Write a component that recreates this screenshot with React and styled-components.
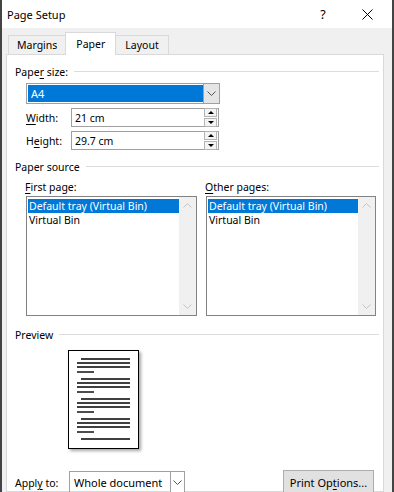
import React from "react";
import styled, { createGlobalStyle } from "styled-components";

const Global = createGlobalStyle`
  html, body { margin: 0; padding: 0; background: #fff; }
  body { font-family: "Noto Sans", "Open Sans", sans-serif; font-size: 10.5px; color: #000; }
`;

const Window = styled.div`
  width: 394px;
  height: 492px;
  box-sizing: border-box;
  border-left: 2px solid #444;
  border-right: 2px solid #444;
  background: #f0f0f0;
  display: flex;
  flex-direction: column;
  overflow: hidden;
`;

const TitleBar = styled.div`
  height: 28px;
  flex-shrink: 0;
  background: #fff;
  display: flex;
  align-items: center;
  padding-left: 5px;
  padding-right: 3px;
  font-size: 11px;
`;

const Title = styled.div`
  flex: 1;
`;

const TitleButton = styled.div`
  width: 44px;
  display: flex;
  justify-content: center;
  font-size: 12.5px;
`;

const TabStrip = styled.div`
  height: 27px;
  flex-shrink: 0;
  display: flex;
  align-items: flex-end;
  padding-left: 7px;
  margin-bottom: -1px;
  position: relative;
  z-index: 1;
`;

const Tab = styled.div`
  height: ${(p) => (p.$active ? 23 : 20)}px;
  box-sizing: border-box;
  padding: 0 ${(p) => (p.$w || 8)}px;
  display: flex;
  align-items: center;
  border: 1px solid #d9d9d9;
  border-bottom: ${(p) => (p.$active ? "none" : "1px solid #d9d9d9")};
  margin-left: -1px;
  background: ${(p) => (p.$active ? "#fff" : "#f0f0f0")};
  font-size: 10.5px;
`;

const Panel = styled.div`
  flex: 1;
  background: #fff;
  border: 1px solid #d9d9d9;
  margin: 0 8px 0 4px;
  padding: 9px 0 0 8px;
  display: flex;
  flex-direction: column;
`;

const Header = styled.div`
  height: 15px;
  margin-top: ${(p) => p.$mt || 0}px;
  display: flex;
  align-items: center;
  gap: 6px;
  &::after {
    content: "";
    flex: 1;
    height: 1px;
    background: #dcdcdc;
    margin-right: 4px;
  }
`;

const U = styled.span`
  text-decoration: underline;
  text-underline-offset: 2px;
`;

const Combo = styled.div`
  width: ${(p) => p.$w}px;
  height: ${(p) => p.$h}px;
  margin-left: ${(p) => p.$ml || 0}px;
  margin-top: ${(p) => p.$mt || 0}px;
  box-sizing: border-box;
  border: 1px solid #a0a0a0;
  display: flex;
  padding: 1px 0 1px 1px;
  flex-shrink: 0;
`;

const ComboText = styled.div`
  flex: 1;
  display: flex;
  align-items: center;
  padding-left: 3px;
  background: ${(p) => (p.$selected ? "#0078d7" : "#fff")};
  color: ${(p) => (p.$selected ? "#fff" : "#000")};
  font-size: 11px;
  white-space: nowrap;
  overflow: hidden;
`;

const DropButton = styled.div`
  width: ${(p) => p.$w || 15}px;
  margin: -1px 0 -1px 0;
  border-left: 1px solid #a0a0a0;
  background: ${(p) => (p.$gray ? "#e5e5e5" : "#fff")};
  display: flex;
  align-items: center;
  justify-content: center;
`;

const FieldRow = styled.div`
  display: flex;
  align-items: center;
  margin-top: 4px;
  padding-left: 11px;
`;

const FieldLabel = styled.div`
  width: 45px;
`;

const Input = styled.div`
  width: 148px;
  height: 19px;
  box-sizing: border-box;
  border: 1px solid #a0a0a0;
  display: flex;
  align-items: center;
  padding-left: 3px;
`;

const InputText = styled.div`
  flex: 1;
  font-size: 10.5px;
`;

const Spin = styled.div`
  width: 13px;
  margin-right: 1px;
  display: flex;
  flex-direction: column;
  gap: 1px;
`;

const SpinHalf = styled.div`
  height: 7px;
  border: 1px solid #b4b4b4;
  background: #f4f4f4;
  display: flex;
  align-items: center;
  justify-content: center;
  &::before {
    content: "";
    border-left: 3px solid transparent;
    border-right: 3px solid transparent;
    ${(p) => (p.$down ? "border-top: 3px solid #000;" : "border-bottom: 3px solid #000;")}
  }
`;

const ListsRow = styled.div`
  display: flex;
  gap: 9px;
  margin-top: 6px;
  padding-left: 11px;
`;

const ListColumn = styled.div`
  display: flex;
  flex-direction: column;
`;

const ListLabel = styled.div`
  height: 14px;
  display: flex;
  align-items: center;
  margin-bottom: 2px;
  margin-left: -1px;
`;

const ListBox = styled.div`
  width: ${(p) => p.$w}px;
  height: 120px;
  box-sizing: border-box;
  border: 1px solid #828282;
  display: flex;
  padding: 2px 0 1px 1px;
`;

const ListItems = styled.div`
  flex: 1;
`;

const ListItem = styled.div`
  height: 14px;
  line-height: 14px;
  padding-left: 1px;
  font-size: 10.5px;
  background: ${(p) => (p.$selected ? "#0078d7" : "transparent")};
  color: ${(p) => (p.$selected ? "#fff" : "#000")};
  white-space: nowrap;
`;

const ScrollBar = styled.div`
  width: 17px;
  margin: -2px 0 -1px 0;
  background: #f0f0f0;
  display: flex;
  flex-direction: column;
  justify-content: space-between;
  align-items: center;
  padding: 6px 0;
`;

const PageWrap = styled.div`
  margin: 8px 0 0 53px;
`;

const Page = styled.div`
  width: 71px;
  height: 99px;
  box-sizing: border-box;
  border: 1px solid #000;
  background: #fff;
  box-shadow: 2px 2px 3px rgba(0, 0, 0, 0.35);
`;

const BottomRow = styled.div`
  display: flex;
  align-items: center;
  margin-top: auto;
  margin-bottom: -3px;
`;

const ApplyLabel = styled.div`
  width: 54px;
  padding-top: 2px;
`;

const Button = styled.div`
  margin-left: 98px;
  width: 91px;
  height: 24px;
  box-sizing: border-box;
  border: 1px solid #adadad;
  background: #e1e1e1;
  display: flex;
  align-items: center;
  justify-content: center;
  font-size: 11px;
  white-space: nowrap;
`;

const Chevron = ({ color = "#555" }) => (
  <svg width="9" height="5" viewBox="0 0 9 5">
    <path d="M0.5 0.5 L4.5 4.5 L8.5 0.5" fill="none" stroke={color} strokeWidth="1" />
  </svg>
);

const ChevronUp = () => (
  <svg width="9" height="5" viewBox="0 0 9 5">
    <path d="M0.5 4.5 L4.5 0.5 L8.5 4.5" fill="none" stroke="#c4c4c4" strokeWidth="1" />
  </svg>
);

const CloseIcon = () => (
  <svg width="11" height="11" viewBox="0 0 11 11">
    <path d="M0.5 0.5 L10.5 10.5 M10.5 0.5 L0.5 10.5" stroke="#000" strokeWidth="1" />
  </svg>
);

const groups = [0, 20, 40, 60];

const PageLines = () => (
  <svg width="69" height="97" viewBox="0 0 69 97">
    <g stroke="#000" strokeWidth="1.4">
      {groups.map((g) => (
        <g key={g}>
          <line x1="12" y1={8 + g} x2="61" y2={8 + g} />
          <line x1="8" y1={12 + g} x2="61" y2={12 + g} />
          <line x1="8" y1={16 + g} x2="61" y2={16 + g} />
          <line x1="8" y1={21 + g} x2="25" y2={21 + g} />
        </g>
      ))}
      <line x1="12" y1="88" x2="61" y2="88" />
    </g>
  </svg>
);

function SourceList({ label, w }) {
  return (
    <ListColumn>
      <ListLabel>{label}</ListLabel>
      <ListBox $w={w}>
        <ListItems>
          <ListItem $selected>Default tray (Virtual Bin)</ListItem>
          <ListItem>Virtual Bin</ListItem>
        </ListItems>
        <ScrollBar>
          <ChevronUp />
          <Chevron color="#c4c4c4" />
        </ScrollBar>
      </ListBox>
    </ListColumn>
  );
}

export default function App() {
  return (
    <>
      <Global />
      <Window>
        <TitleBar>
          <Title>Page Setup</Title>
          <TitleButton>?</TitleButton>
          <TitleButton>
            <CloseIcon />
          </TitleButton>
        </TitleBar>
        <TabStrip>
          <Tab>Margins</Tab>
          <Tab $active $w={10}>Paper</Tab>
          <Tab $w={9}>Layout</Tab>
        </TabStrip>
        <Panel>
          <Header>
            <span>
              Pape<U>r</U> size:
            </span>
          </Header>
          <Combo $w={194} $h={21} $ml={11} $mt={4}>
            <ComboText $selected>A4</ComboText>
            <DropButton $gray>
              <Chevron />
            </DropButton>
          </Combo>
          <FieldRow>
            <FieldLabel>
              <U>W</U>idth:
            </FieldLabel>
            <Input>
              <InputText>21 cm</InputText>
              <Spin>
                <SpinHalf />
                <SpinHalf $down />
              </Spin>
            </Input>
          </FieldRow>
          <FieldRow>
            <FieldLabel>
              H<U>e</U>ight:
            </FieldLabel>
            <Input>
              <InputText>29.7 cm</InputText>
              <Spin>
                <SpinHalf />
                <SpinHalf $down />
              </Spin>
            </Input>
          </FieldRow>
          <Header $mt={9}>
            <span>Paper source</span>
          </Header>
          <ListsRow>
            <SourceList
              w={171}
              label={
                <span>
                  <U>F</U>irst page:
                </span>
              }
            />
            <SourceList
              w={170}
              label={
                <span>
                  <U>O</U>ther pages:
                </span>
              }
            />
          </ListsRow>
          <Header $mt={11}>
            <span>Preview</span>
          </Header>
          <PageWrap>
            <Page>
              <PageLines />
            </Page>
          </PageWrap>
          <BottomRow>
            <ApplyLabel>
              Appl<U>y</U> to:
            </ApplyLabel>
            <Combo $w={116} $h={22}>
              <ComboText>Whole document</ComboText>
              <DropButton $w={13}>
                <Chevron />
              </DropButton>
            </Combo>
            <Button>
              <span>
                Print Op<U>t</U>ions...
              </span>
            </Button>
          </BottomRow>
        </Panel>
      </Window>
    </>
  );
}
